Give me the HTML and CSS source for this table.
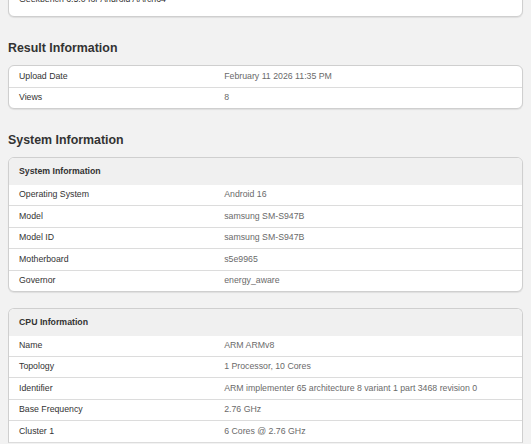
FILE: index.html
```html
<!DOCTYPE html>
<html lang="en">
<head>
<meta charset="utf-8">
<title>Geekbench Result</title>
<link rel="stylesheet" href="styles.css">
</head>
<body>
<div class="card card-top">
  <div class="top-text">Geekbench 6.5.0 for Android AArch64</div>
</div>

<h2 class="section-title">Result Information</h2>
<div class="card">
  <table class="info-table">
    <tr><td class="name">Upload Date</td><td class="value">February 11 2026 11:35 PM</td></tr>
    <tr><td class="name">Views</td><td class="value">8</td></tr>
  </table>
</div>

<h2 class="section-title">System Information</h2>
<div class="card">
  <table class="info-table">
    <tr class="head"><th colspan="2">System Information</th></tr>
    <tr><td class="name">Operating System</td><td class="value">Android 16</td></tr>
    <tr><td class="name">Model</td><td class="value">samsung SM-S947B</td></tr>
    <tr><td class="name">Model ID</td><td class="value">samsung SM-S947B</td></tr>
    <tr><td class="name">Motherboard</td><td class="value">s5e9965</td></tr>
    <tr><td class="name">Governor</td><td class="value">energy_aware</td></tr>
  </table>
</div>

<div class="card card-gap card-open">
  <table class="info-table">
    <tr class="head"><th colspan="2">CPU Information</th></tr>
    <tr><td class="name">Name</td><td class="value">ARM ARMv8</td></tr>
    <tr><td class="name">Topology</td><td class="value">1 Processor, 10 Cores</td></tr>
    <tr><td class="name">Identifier</td><td class="value">ARM implementer 65 architecture 8 variant 1 part 3468 revision 0</td></tr>
    <tr><td class="name">Base Frequency</td><td class="value">2.76 GHz</td></tr>
    <tr><td class="name">Cluster 1</td><td class="value">6 Cores @ 2.76 GHz</td></tr>
  </table>
</div>
</body>
</html>
```

FILE: styles.css
```css
html, body {
  background: #f2f2f2;
}
body {
  margin: 0;
  padding: 0 8px 20px;
  font-family: "Liberation Sans", Arial, sans-serif;
  font-size: 8.75px;
  color: #333;
}
.card {
  background: #fff;
  border: 1px solid #cfcfcf;
  border-radius: 6px;
  overflow: hidden;
  box-shadow: 0 1px 1px rgba(0, 0, 0, 0.08);
}
.card-top {
  margin-top: -18px;
}
.card-gap {
  margin-top: 16px;
}
.card-open {
  border-bottom-color: #dcdcdc;
  border-radius: 6px 6px 0 0;
  box-shadow: none;
}
.top-text {
  padding: 10px 10px 11px;
  line-height: 12.45px;
  color: #333;
}
.section-title {
  font-size: 12.4px;
  font-weight: bold;
  line-height: 16px;
  color: #333;
  margin: 22.5px 0 9.5px;
}
.info-table {
  width: 100%;
  border-collapse: collapse;
}
.info-table th {
  text-align: left;
  font-weight: bold;
  background: #f0f0f0;
  padding: 7px 10px;
  line-height: 12.45px;
  color: #333;
}
.info-table td {
  padding: 3.5px 10px 4.5px;
  line-height: 12.45px;
  vertical-align: top;
}
.info-table tr + tr td {
  border-top: 1px solid #dcdcdc;
}
.info-table tr.head + tr td {
  border-top: none;
}
.info-table .name {
  width: 40%;
  color: #333;
}
.info-table .value {
  color: #6a6a6a;
}
```
